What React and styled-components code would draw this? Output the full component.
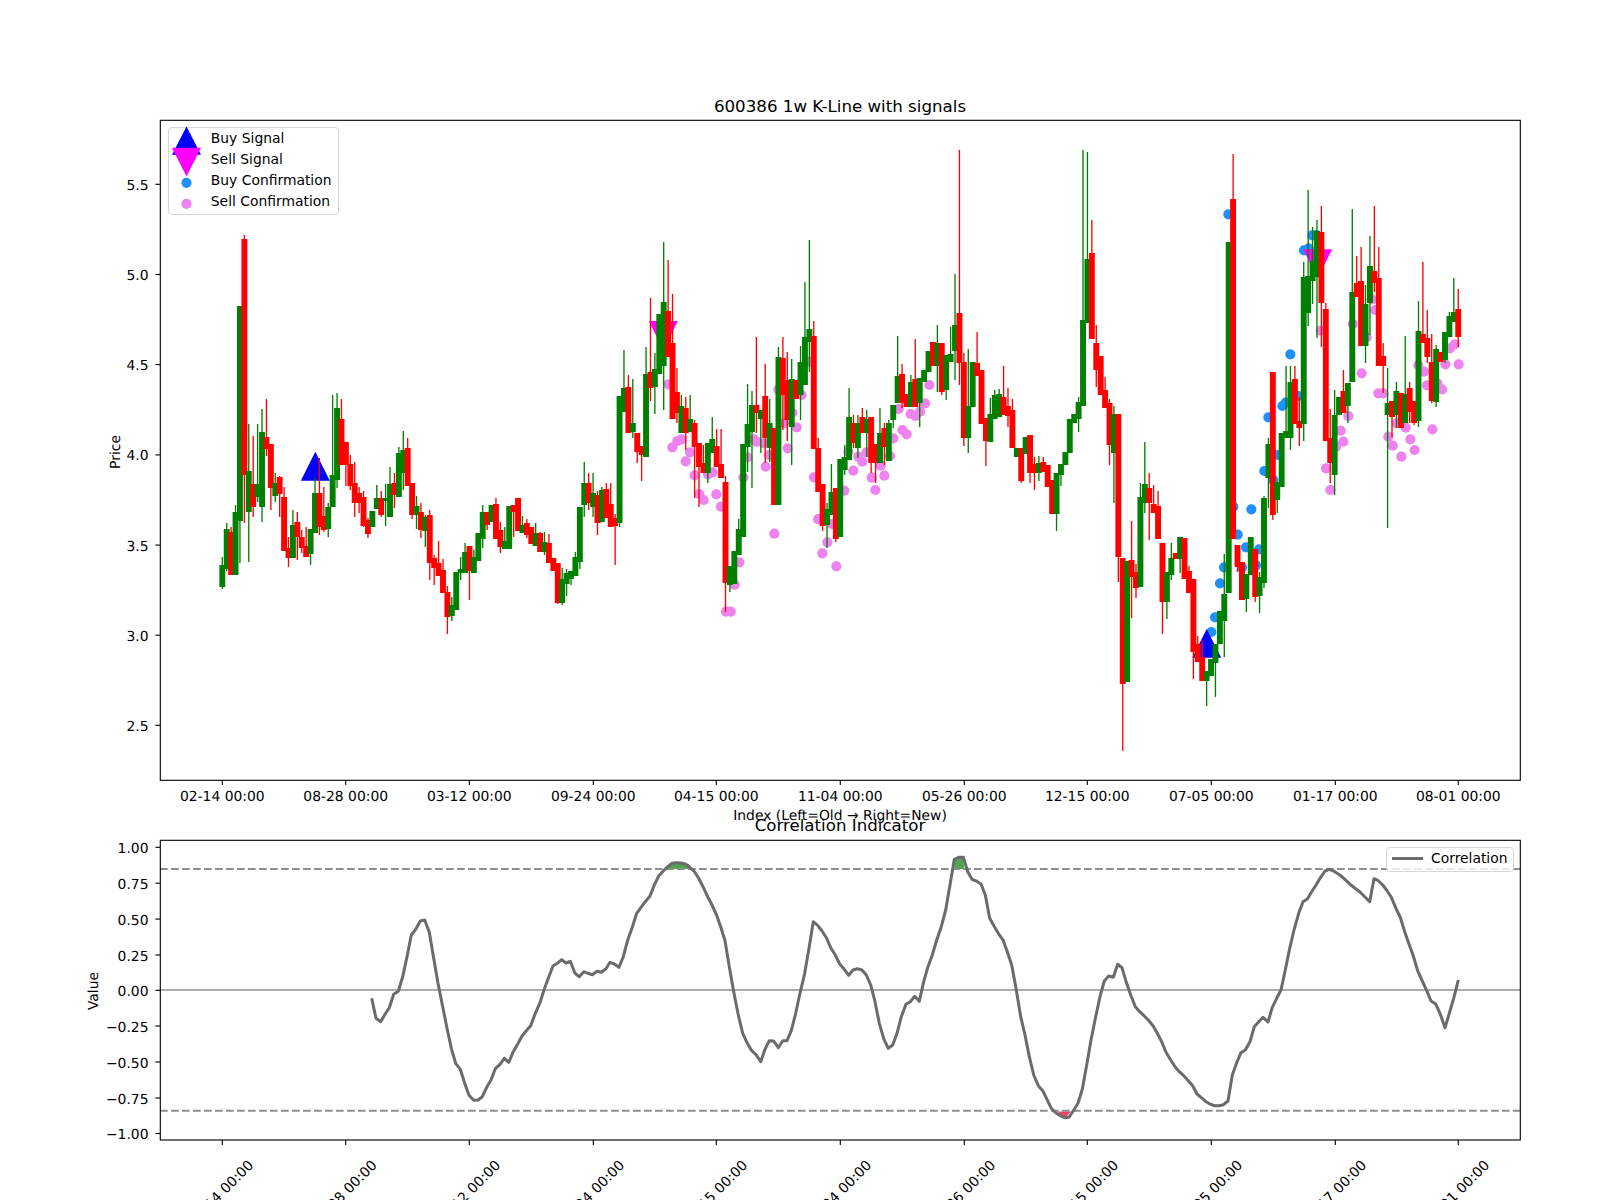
import { createGlobalStyle, styled } from 'styled-components';

const GlobalStyle = createGlobalStyle`
  html, body {
    margin: 0;
    padding: 0;
    background: #fff;
  }
`;

const Figure = styled.div`
  width: 1600px;
  height: 1200px;
  overflow: hidden;
  background: #fff;
  color: #000;
  font-family: "DejaVu Sans", sans-serif;
  display: flex;
  flex-direction: column;
`;

const TitleBar = styled.div`
  height: ${(p) => p.$height}px;
  margin-left: 160px;
  width: 1360px;
  display: flex;
  align-items: flex-end;
  justify-content: center;
  font-size: 16.67px;
  line-height: ${(p) => p.$line}px;
  white-space: nowrap;
  position: relative;
  z-index: 1;
`;

const ChartWrap = styled.div`
  position: relative;
  width: 1600px;
  height: ${(p) => p.$height}px;
`;

const ChartSvg = styled.svg`
  display: block;
  width: 1600px;
  height: 100%;
  overflow: visible;
`;

const Frame = styled.rect`
  fill: none;
  stroke: #000;
  stroke-width: 1.11px;
`;

const Tick = styled.line`
  stroke: #000;
  stroke-width: 1.11px;
`;

const Label = styled.text`
  font-family: "DejaVu Sans", sans-serif;
  font-size: 13.89px;
  fill: #000;
  text-rendering: geometricPrecision;
`;

const Legend = styled.div`
  position: absolute;
  box-sizing: border-box;
  background: rgba(255, 255, 255, 0.8);
  border: 1.4px solid #d6d6d6;
  border-radius: 4px;
  font-size: 13.89px;
  line-height: 21px;
`;

const SignalLegend = styled(Legend)`
  left: 167.5px;
  top: 7.3px;
  width: 171px;
  height: 88px;
  padding: 0 0 0 3.3px;
  display: flex;
  flex-direction: column;
`;

const CorrLegend = styled(Legend)`
  left: 1386px;
  top: 7.3px;
  width: 127.5px;
  height: 25px;
  padding: 0 0 2px 5px;
  display: flex;
  align-items: center;
  gap: 8px;
`;

const LegendRow = styled.div`
  display: flex;
  align-items: center;
  gap: 10px;
  height: 21px;
  white-space: nowrap;
`;

const Marker = styled.svg`
  width: 29px;
  height: 21px;
  flex: none;
  overflow: visible;
`;

const LineSwatch = styled.span`
  width: 31px;
  height: 3px;
  background: #6b6b6b;
  flex: none;
`;

const X0 = 222.3;
const STEP = 4.414;
const TICK_XS = [222.3, 345.7, 469.3, 593.3, 716.3, 840.3, 964.3, 1087.3, 1211.3, 1335.3, 1458.3];
const TICK_DATES = ['02-14', '08-28', '03-12', '09-24', '04-15', '11-04', '05-26', '12-15', '07-05', '01-17', '08-01'];
const PRICE_TICKS = [['5.5', 184.3], ['5.0', 274.5], ['4.5', 364.6], ['4.0', 454.9], ['3.5', 545.1], ['3.0', 635.2], ['2.5', 725.3]];
const CORR_TICKS = [
  ['1.00', 847.3], ['0.75', 883.2], ['0.50', 919.1], ['0.25', 955], ['0.00', 990.3],
  ['\u22120.25', 1026], ['\u22120.50', 1062], ['\u22120.75', 1098], ['\u22121.00', 1133.5],
];

// kind, body top, body bottom, wick top, wick bottom (page y, one row per week)
const candles = [
  ['g',565,587,557,589],['g',529,569,523,571],['r',532,575,527,575],['g',512,575,505,575],['g',306,521,306,563],
  ['r',239,475,235,523],['g',471,512,424,562],['r',484,507,436,517],['g',484,497,424,502],['g',432,507,409,522],
  ['r',437,449,399,456],['r',444,488,444,510],['g',483,496,473,502],['r',477,494,476,517],['r',497,551,487,551],
  ['r',548,558,537,567],['g',525,558,510,558],['r',522,537,512,560],['r',537,548,530,553],['r',546,557,527,557],
  ['g',529,554,529,565],['g',493,533,478,533],['r',493,527,458,535],['r',516,530,487,532],['g',507,529,503,537],
  ['g',475,507,395,507],['g',408,480,393,488],['r',419,465,399,465],['r',442,465,442,486],['r',464,486,455,490],
  ['r',483,503,462,517],['r',493,503,487,513],['r',497,526,491,527],['r',520,534,518,538],['g',511,527,511,527],
  ['g',498,509,485,509],['r',498,515,491,517],['g',498,501,484,526],['g',484,517,467,517],['r',483,495,473,508],
  ['g',453,497,447,497],['g',450,473,431,490],['r',448,486,438,485],['r',483,515,483,519],['g',506,515,496,529],
  ['r',512,530,503,538],['g',517,531,515,547],['r',515,563,510,580],['r',558,568,555,585],['r',563,576,541,576],
  ['r',570,593,559,593],['r',592,617,586,634],['g',605,616,597,621],['g',572,610,572,610],['g',569,573,557,580],
  ['g',552,573,543,573],['r',546,571,546,600],['g',557,573,550,573],['g',533,561,533,561],['g',512,539,505,548],
  ['r',512,525,512,530],['g',505,522,505,522],['r',504,539,498,539],['r',530,547,522,553],['g',541,549,527,549],
  ['g',506,549,506,549],['r',505,512,505,537],['r',498,531,498,531],['g',525,533,516,533],['r',523,535,519,538],
  ['r',527,544,527,544],['g',533,546,523,546],['r',533,552,532,552],['g',542,552,532,555],['r',543,563,534,563],
  ['r',558,571,558,571],['r',563,603,563,604],['g',579,603,568,605],['g',573,584,569,596],['g',571,579,571,585],
  ['g',557,576,552,576],['g',507,562,507,569],['g',483,505,462,517],['r',483,503,473,510],['g',493,507,473,517],
  ['r',495,523,491,535],['g',490,522,487,522],['r',489,518,483,518],['r',504,527,483,527],['r',518,526,514,565],
  ['g',396,523,396,527],['g',388,412,350,412],['r',387,433,375,433],['g',423,432,379,438],['r',433,452,433,463],
  ['r',446,455,446,481],['g',374,457,347,457],['r',372,388,298,401],['g',369,387,353,414],['g',314,374,314,374],
  ['g',302,366,242,410],['r',311,357,260,357],['r',343,419,294,419],['r',392,413,368,423],['g',406,433,395,433],
  ['r',408,433,397,450],['g',419,432,395,432],['r',423,447,420,498],['r',443,467,443,507],['r',463,473,445,473],
  ['g',443,473,443,483],['g',439,453,417,453],['r',446,467,429,467],['r',464,478,429,478],['r',482,583,476,612],
  ['g',566,585,566,592],['g',551,584,551,584],['g',529,555,519,555],['g',444,537,444,537],['g',424,447,384,472],
  ['g',405,432,391,488],['r',405,413,337,433],['g',410,419,410,453],['r',396,438,364,463],['g',423,448,399,462],
  ['r',428,505,428,505],['g',357,505,347,505],['r',358,395,337,430],['r',380,420,352,441],['g',379,427,359,465],
  ['r',380,399,380,399],['g',362,395,346,420],['g',337,385,282,385],['g',329,342,240,372],['r',336,449,321,449],
  ['r',448,492,438,492],['r',484,526,484,531],['g',509,525,503,548],['g',492,515,464,515],['r',488,539,488,542],
  ['g',459,537,459,537],['g',457,470,445,475],['g',417,460,388,460],['r',423,443,415,448],['g',423,448,415,458],
  ['r',417,433,408,433],['g',419,433,410,457],['r',417,463,417,473],['r',444,463,444,483],['g',433,463,408,463],
  ['r',428,447,423,465],['g',423,461,420,460],['g',405,420,405,428],['g',376,403,336,403],['r',374,403,364,408],
  ['r',394,407,394,407],['g',382,407,375,407],['r',379,407,339,407],['g',378,403,378,427],['g',370,382,370,382],
  ['g',351,372,351,372],['r',342,366,342,366],['g',343,366,325,392],['r',343,392,343,395],['g',355,390,355,400],
  ['g',354,362,327,362],['g',325,351,274,380],['r',313,363,150,385],['r',362,438,353,446],['g',406,438,349,453],
  ['g',362,407,362,407],['r',363,376,332,376],['r',370,424,370,424],['r',418,441,418,466],['g',414,442,398,442],
  ['g',395,419,390,419],['g',394,417,389,417],['r',397,415,366,415],['r',406,416,388,427],['r',410,448,399,448],
  ['g',448,457,448,457],['r',448,481,448,483],['g',437,454,437,454],['r',435,473,435,483],['r',464,473,457,490],
  ['g',463,473,456,481],['r',462,472,457,472],['r',465,487,465,487],['r',480,514,480,514],['g',473,514,473,531],
  ['g',464,475,464,486],['g',452,465,452,465],['g',419,453,419,453],['g',414,423,414,423],['g',402,419,397,432],
  ['g',320,406,150,406],['g',259,323,152,323],['r',253,339,220,339],['r',343,370,325,387],['r',356,395,356,395],
  ['r',390,408,377,408],['r',403,445,399,465],['g',414,453,406,503],['r',414,557,414,582],['r',558,684,558,751],
  ['g',561,682,561,682],['r',560,577,521,618],['r',572,588,564,598],['g',497,587,483,587],['g',484,503,442,513],
  ['r',488,503,473,540],['r',504,513,485,513],['r',506,539,491,539],['r',543,602,543,634],['g',572,602,572,619],
  ['g',558,575,543,580],['r',553,559,553,559],['g',537,559,537,573],['r',538,579,538,579],['r',571,593,566,593],
  ['r',579,652,579,679],['r',644,662,636,662],['r',657,681,640,681],['g',671,681,671,706],['g',659,676,659,676],
  ['g',644,663,644,697],['g',611,644,611,644],['g',594,621,554,657],['g',242,593,242,593],['r',199,539,154,539],
  ['r',545,567,545,572],['r',562,600,562,600],['g',574,599,574,612],['g',537,575,537,575],['r',549,597,549,602],
  ['g',577,596,572,613],['g',498,583,496,588],['g',444,478,438,508],['r',372,515,372,520],['g',482,500,482,513],
  ['g',433,487,433,487],['g',431,438,366,438],['g',382,438,366,450],['r',379,424,366,424],['r',421,428,397,446],
  ['g',277,424,262,441],['g',276,313,190,326],['g',261,281,227,304],['g',231,277,220,338],['r',232,303,206,347],
  ['r',309,441,303,441],['r',438,463,409,483],['g',415,475,390,495],['g',397,415,397,415],['r',391,413,370,413],
  ['g',383,406,383,423],['g',292,382,209,382],['r',283,297,256,297],['r',281,346,247,346],['g',304,346,285,363],
  ['g',266,303,236,335],['r',271,283,206,292],['r',278,366,247,366],['r',356,366,343,393],['g',403,415,368,528],
  ['r',401,417,401,437],['g',391,415,382,428],['r',393,428,393,428],['g',394,423,336,423],['r',388,412,382,423],
  ['r',401,423,401,425],['g',331,421,301,427],['r',334,343,262,343],['r',338,357,310,363],['r',362,401,334,403],
  ['g',349,402,345,407],['r',352,362,352,362],['g',332,360,332,363],['g',316,337,312,337],['g',312,322,278,322],
  ['r',309,337,289,347],
];

const fromZoom = (ox, oy) => ([x, y]) => [ox + x / 3, oy + y / 3];

const sellDots = [
  ...[
    [205,793],[217,982],[232,963],[245,958],[257,1024],[270,997],[284,1066],[298,1122],[311,1140],[324,1063],[338,1057],
    [349,1123],[363,1160],[430,1072],[443,1012],[462,958],[470,965],[490,970],[497,1040],[507,1005],[535,808],[552,910],
    [563,985],[577,878],[590,922],[605,825],[630,725],[642,1072],[655,1197],[733,1112],[760,1052],[775,1010],[787,1025],
    [800,997],[745,995],[815,1073],[826,1110],[842,1037],[853,1067],[870,1008],[880,955],[896,867],[907,930],[920,943],
    [932,882],[947,888],[960,875],[975,850],[988,795],
  ].map(fromZoom(600, 120)),
  ...[[378,515],[392,515],[404,434],[418,367],[523,281],[655,238],[667,340],[682,307],[695,252],[709,379]].map(fromZoom(600, 440)),
  ...[
    [812,632],[908,612],[935,760],[965,538],[975,570],[950,652],[985,820],[1000,820],[895,888],[872,932],[880,965],[858,980],
    [828,1045],[841,1110],[1015,950],[1028,977],[1040,910],[1054,1010],[1067,923],[1081,958],[1094,990],[1147,928],[1105,735],
    [1122,755],[1131,796],[1162,790],[1176,808],[1186,733],[1200,685],[1214,673],[1226,733],[800,455],
  ].map(fromZoom(1050, 120)),
];

const buyDots = [
  ...[
    [535,283],[550,1160],[604,1168],[655,892],[697,858],[707,848],[721,703],[643,1053],[683,1005],[670,1080],[745,828],
    [762,391],[776,385],[787,346],[800,345],
  ].map(fromZoom(1050, 120)),
  ...[[484,576],[495,532],[510,430],[522,382],[563,284],[576,382],[588,322],[618,376],[627,328]].map(fromZoom(1050, 440)),
];

const corrLine = [
  ...[
    [875,535],[888,595],[902,605],[915,583],[928,563],[941,523],[955,514],[968,470],[981,410],[994,345],[1007,328],[1021,303],
    [1034,300],[1048,337],[1061,415],[1074,490],[1088,560],[1101,625],[1114,685],[1127,730],[1141,748],[1154,790],[1167,826],
    [1181,841],[1194,840],[1207,830],[1220,802],[1233,780],[1246,746],[1260,733],[1273,715],[1286,727],[1299,697],[1313,672],
    [1326,648],[1339,632],[1352,617],[1366,580],[1380,548],[1392,510],[1405,475],[1419,438],[1432,430],[1445,419],[1458,429],
    [1471,424],[1485,460],[1498,470],[1511,455],[1524,460],[1537,464],[1551,454],
  ].map(fromZoom(80, 820)),
  ...[
    [4,457],[17,447],[30,427],[43,432],[57,442],[70,410],[83,360],[97,322],[110,280],[123,262],[136,245],[150,228],[163,195],
    [176,168],[190,153],[203,140],[216,130],[229,128],[243,129],[256,132],[269,142],[282,153],[296,175],[309,200],[322,228],
    [336,255],[349,283],[362,320],[375,362],[388,440],[402,520],[415,585],[428,640],[441,668],[455,692],[468,704],[482,725],
    [495,688],[508,662],[521,663],[535,683],[548,662],[561,662],[574,632],[587,580],[600,520],[614,460],[627,385],[640,305],
    [653,316],[666,333],[680,355],[693,385],[706,405],[719,432],[733,448],[746,466],[759,450],[772,446],[786,450],[799,465],
    [812,495],[825,545],[838,610],[852,658],[865,685],[878,675],[891,640],[904,590],[918,553],[931,545],[944,529],[958,544],
    [971,485],[984,440],[997,405],[1010,360],[1024,320],[1037,270],[1050,195],[1063,118],[1076,112],[1090,112],[1103,155],
    [1116,178],[1129,183],[1143,192],[1156,225],[1169,295],[1182,318],[1195,340],[1209,360],[1222,395],[1235,435],[1248,505],
    [1262,590],[1275,645],[1288,710],[1301,765],[1315,797],[1328,812],[1341,838],[1354,865],[1367,878],[1381,887],[1394,893],
    [1407,892],[1420,872],[1434,850],
  ].map(fromZoom(600, 820)),
  ...[
    [7,808],[20,735],[33,660],[47,590],[60,530],[73,483],[86,468],[100,472],[113,433],[126,443],[139,487],[153,527],[166,560],
    [179,575],[192,587],[205,600],[219,617],[232,640],[245,665],[258,697],[272,720],[285,740],[298,755],[311,767],[325,782],
    [338,797],[351,822],[364,833],[378,845],[391,853],[404,857],[417,857],[430,854],[444,843],[457,765],[470,728],[483,698],
    [496,690],[510,665],[523,620],[536,605],[549,592],[564,606],[577,562],[590,535],[603,510],[616,450],[629,385],[642,330],
    [656,280],[669,245],[682,237],[695,215],[708,195],[722,172],[735,153],[748,148],[761,153],[775,162],[788,172],[801,184],
    [814,196],[828,207],[841,217],[854,230],[869,245],[882,176],[895,182],[908,195],[921,212],[934,232],[948,265],[961,292],
    [974,335],[987,372],[1000,408],[1014,455],[1027,483],[1040,512],[1053,543],[1067,552],[1080,580],[1095,623],[1108,580],
    [1121,535],[1135,480],
  ].map(fromZoom(1080, 820)),
];

const toPoints = (pts) => pts.map(([x, y]) => `${x.toFixed(1)},${y.toFixed(1)}`).join(' ');

const COLORS = { g: '#008000', r: '#ff0000' };

function Triangle({ x, base, apex, color }) {
  return <polygon points={`${x - 14.5},${base} ${x + 14.5},${base} ${x},${apex}`} fill={color} />;
}

function PriceChart() {
  return (
    <ChartSvg viewBox="0 120 1600 700">
      <rect x="160" y="120" width="1360" height="660" fill="#fff" />
      {buyDots.map(([x, y], i) => <circle key={i} cx={x} cy={y} r="5.1" fill="#1e90ff" />)}
      {sellDots.map(([x, y], i) => <circle key={i} cx={x} cy={y} r="5.1" fill="#ee82ee" />)}
      <Triangle x={315.3} base={480.7} apex={451.7} color="#0000ff" />
      <Triangle x={1206.7} base={657.7} apex={629} color="#0000ff" />
      <Triangle x={663.3} base={321} apex={350} color="#ff00ff" />
      <Triangle x={1317.7} base={249.3} apex={278} color="#ff00ff" />
      {candles.map(([kind, top, bottom, wickTop, wickBottom], i) => {
        const x = X0 + i * STEP;
        return (
          <g key={i} fill={COLORS[kind]}>
            <rect x={x - 0.67} y={wickTop} width="1.33" height={wickBottom - wickTop} />
            <rect x={x - 2.95} y={top} width="5.9" height={bottom - top} />
          </g>
        );
      })}
      <Frame x="160.3" y="120.3" width="1360" height="660" />
      {PRICE_TICKS.map(([text, y]) => (
        <g key={text}>
          <Tick x1="155.4" x2="160" y1={y} y2={y} />
          <Label x="148.5" y={y + 5.5} textAnchor="end">{text}</Label>
        </g>
      ))}
      {TICK_XS.map((x, i) => (
        <g key={x}>
          <Tick x1={x} x2={x} y1="780" y2="785" />
          <Label x={x} y="801" textAnchor="middle">{TICK_DATES[i]} 00:00</Label>
        </g>
      ))}
      <Label x="840" y="820" textAnchor="middle">Index (Left=Old → Right=New)</Label>
      <Label transform="translate(120 452) rotate(-90)" textAnchor="middle">Price</Label>
    </ChartSvg>
  );
}

function CorrelationChart() {
  return (
    <ChartSvg viewBox="0 840 1600 360">
      <polygon points="667.7,869 672,864.6 676.3,863.5 681,862.7 685,863 689,864.6 693,869" fill="#4fa64f" />
      <polygon points="954.3,869 954.7,859.5 959,857.5 963,857.5 964.3,869" fill="#4fa64f" />
      <polygon points="1058,1111.5 1071,1111.5 1067,1116 1066,1117 1063,1117.5 1060,1115.5" fill="#e5476f" />
      <line x1="160" x2="1520" y1="869" y2="869" stroke="#8e8e8e" strokeWidth="2.08" strokeDasharray="7.7 3.3" />
      <line x1="160" x2="1520" y1="1110.7" y2="1110.7" stroke="#8e8e8e" strokeWidth="2.08" strokeDasharray="7.7 3.3" />
      <line x1="160" x2="1520" y1="990" y2="990" stroke="#acacac" strokeWidth="2.08" />
      <polyline points={toPoints(corrLine)} fill="none" stroke="#6b6b6b" strokeWidth="3" strokeLinejoin="round" />
      <Frame x="160.3" y="840.3" width="1360" height="299.7" />
      {CORR_TICKS.map(([text, y]) => (
        <g key={text}>
          <Tick x1="155.4" x2="160" y1={y} y2={y} />
          <Label x="148.5" y={y + 5.8} textAnchor="end">{text}</Label>
        </g>
      ))}
      {TICK_XS.map((x, i) => (
        <g key={x}>
          <Tick x1={x} x2={x} y1="1140" y2="1145" />
          <Label transform={`translate(${x + 2} 1196) rotate(-45)`} textAnchor="middle">{TICK_DATES[i]} 00:00</Label>
        </g>
      ))}
      <Label transform="translate(98 991) rotate(-90)" textAnchor="middle">Value</Label>
    </ChartSvg>
  );
}

export default function App() {
  return (
    <Figure>
      <GlobalStyle />
      <TitleBar $height={120} $line={26}>600386 1w K-Line with signals</TitleBar>
      <ChartWrap $height={700}>
        <PriceChart />
        <SignalLegend>
          <LegendRow>
            <Marker viewBox="0 0 29 21"><polygon points="0,26.8 29,26.8 14.5,-1.5" fill="#0000ff" /></Marker>
            Buy Signal
          </LegendRow>
          <LegendRow>
            <Marker viewBox="0 0 29 21"><polygon points="0,-1.2 29,-1.2 14.5,27.5" fill="#ff00ff" /></Marker>
            Sell Signal
          </LegendRow>
          <LegendRow>
            <Marker viewBox="0 0 29 21"><circle cx="14.5" cy="12.8" r="5.1" fill="#1e90ff" /></Marker>
            Buy Confirmation
          </LegendRow>
          <LegendRow>
            <Marker viewBox="0 0 29 21"><circle cx="14.5" cy="12.8" r="5.1" fill="#ee82ee" /></Marker>
            Sell Confirmation
          </LegendRow>
        </SignalLegend>
      </ChartWrap>
      <TitleBar $height={20} $line={28}>Correlation Indicator</TitleBar>
      <ChartWrap $height={360}>
        <CorrelationChart />
        <CorrLegend>
          <LineSwatch />
          Correlation
        </CorrLegend>
      </ChartWrap>
    </Figure>
  );
}
